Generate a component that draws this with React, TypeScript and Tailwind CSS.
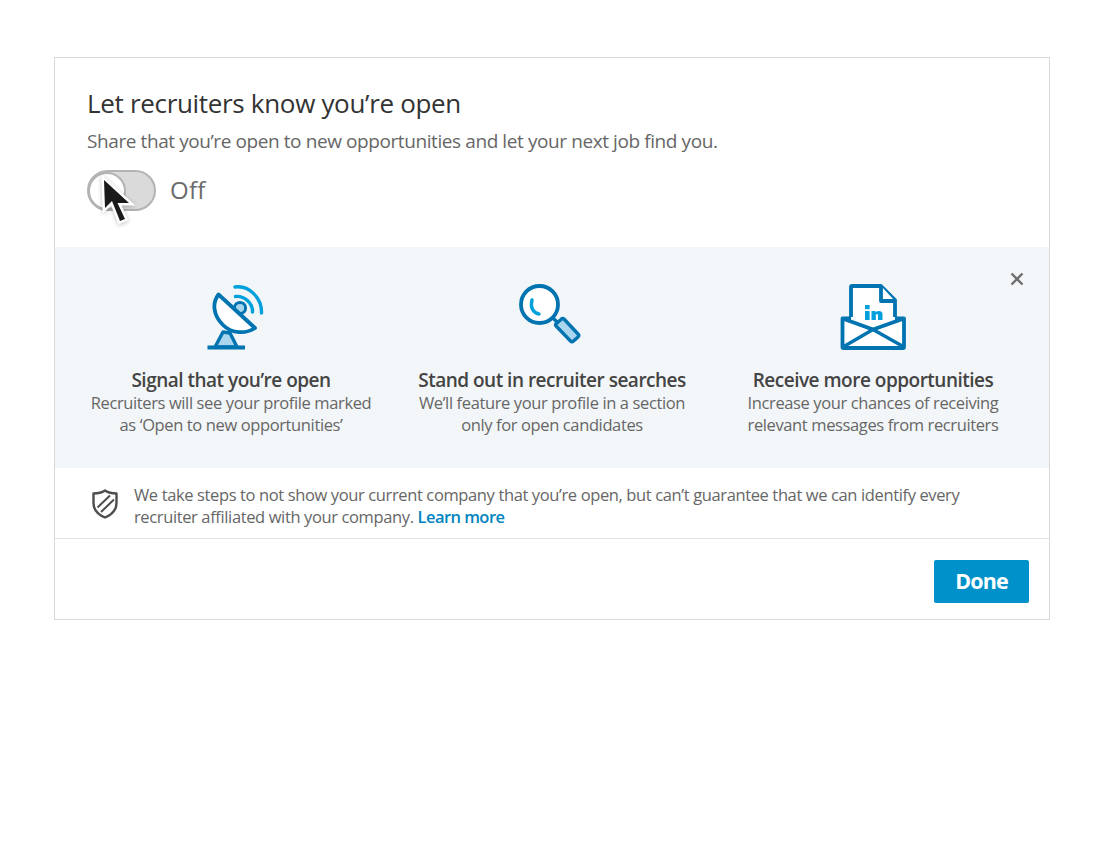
import React from 'react';

const DishIcon = () => (
  <svg width="90" height="90" viewBox="0 0 90 90" fill="none" className="block">
    <path d="M33 62 L25 77 H47 L40 63 Z" fill="#a9d6ee" stroke="#0073b1" strokeWidth="3.4" strokeLinejoin="round" />
    <path d="M17.5 77.5 H55" stroke="#0073b1" strokeWidth="3.8" />
    <circle cx="50" cy="38" r="5.6" fill="#a9d6ee" stroke="#0073b1" strokeWidth="3" />
    <path d="M28.5 24.5 L65 58 C56 64 42 64 33 55 C23 45 22 33 28.5 24.5 Z" fill="#fff" stroke="#0073b1" strokeWidth="3.8" strokeLinejoin="round" />
    <path d="M45 17 C59 15 72 28 71.5 43" stroke="#00a0dc" strokeWidth="3.4" strokeLinecap="round" />
    <path d="M45.5 26.5 C54 25.5 63 33 62.5 42" stroke="#00a0dc" strokeWidth="3.4" strokeLinecap="round" />
  </svg>
);

const SearchIcon = () => (
  <svg width="90" height="90" viewBox="0 0 90 90" fill="none" className="block">
    <circle cx="34.5" cy="34.5" r="18.5" fill="#fff" stroke="#0073b1" strokeWidth="3.8" />
    <path d="M48 48 L54 54" stroke="#0073b1" strokeWidth="3.4" />
    <path d="M59 49 L73 64 Q74.5 65.5 73 67 L68.5 71 Q67 72.5 65.5 71 L51 56 Q50 54.5 51.5 53.5 L56 49.5 Q57.5 48 59 49 Z" fill="#a9d6ee" stroke="#0073b1" strokeWidth="3.4" />
    <path d="M27 30 C25 37 28 43 34 44" stroke="#00a0dc" strokeWidth="3.4" strokeLinecap="round" />
  </svg>
);

const MailIcon = () => (
  <svg width="90" height="90" viewBox="0 0 90 90" fill="none" className="block">
    <path d="M21 48 V17 Q21 16 22 16 H51 L65 30 V48 L43 60 Z" fill="#fff" />
    <path d="M21 47 V17 Q21 16 22 16 H51 L65 30 V47" stroke="#0073b1" strokeWidth="3.8" strokeLinejoin="round" />
    <path d="M51 16 V31 H65" stroke="#0073b1" strokeWidth="3.8" strokeLinejoin="round" fill="#fff" />
    <path d="M12.5 48.5 L43 60.5 L74 48.5 V77 Q74 78 73 78 H13.5 Q12.5 78 12.5 77 Z" fill="#fff" />
    <path d="M12.5 48.5 H21 M65 48.5 H74 V77 Q74 78 73 78 H13.5 Q12.5 78 12.5 77 V48.5 L43 59.5 L74 48.5" stroke="#0073b1" strokeWidth="3.8" strokeLinejoin="round" />
    <path d="M13 77 L43 59.5 L74 77" stroke="#0073b1" strokeWidth="3.4" strokeLinejoin="round" />
    <rect x="35" y="41" width="4.6" height="9" fill="#00a0dc" />
    <rect x="35" y="35" width="4.6" height="4.2" fill="#00a0dc" />
    <path d="M41.5 41 H45.5 V42.5 C47 40.5 52.5 40 52.5 44.5 V50 H48 V45.5 C48 43.5 45.8 43.5 45.8 45.5 V50 H41.5 Z" fill="#00a0dc" />
  </svg>
);

const ShieldIcon = () => (
  <svg width="28" height="32" viewBox="0 0 28 32" fill="none" className="block">
    <path d="M14 2.5 C17 4.5 21 5.5 25.5 5.5 V15 C25.5 22 20 27 14 29.5 C8 27 2.5 22 2.5 15 V5.5 C7 5.5 11 4.5 14 2.5 Z" stroke="#4d4d4d" strokeWidth="2.4" strokeLinejoin="round" />
    <path d="M6.5 19.5 L19 7.5 M10 24 L23 11.5" stroke="#4d4d4d" strokeWidth="2" />
  </svg>
);

const Cursor = () => (
  <svg width="44" height="58" viewBox="0 0 44 58" fill="none" className="block drop-shadow-[0_1px_2px_rgba(0,0,0,0.25)]">
    <path d="M6 5 L7 33 L14 26 L22 46 L27 44 L19.5 28 L31 28 Z" fill="#1a1a1a" stroke="#fff" strokeWidth="5" strokeLinejoin="miter" paintOrder="stroke" />
  </svg>
);

const benefits = [
  {
    icon: <DishIcon />,
    shift: 'ml-[8px]',
    title: 'Signal that you’re open',
    lines: ['Recruiters will see your profile marked', 'as ‘Open to new opportunities’'],
  },
  {
    icon: <SearchIcon />,
    shift: '-ml-[4px]',
    title: 'Stand out in recruiter searches',
    lines: ['We’ll feature your profile in a section', 'only for open candidates'],
  },
  {
    icon: <MailIcon />,
    shift: 'ml-[4px]',
    title: 'Receive more opportunities',
    lines: ['Increase your chances of receiving', 'relevant messages from recruiters'],
  },
];

const App: React.FC = () => {
  return (
    <div className="min-h-[866px] bg-white pt-[57px] pl-[54px] font-['Open_Sans',sans-serif] text-[#595959]">
      <div className="w-[996px] h-[563px] border border-[#d9d9d9] flex flex-col">
        <div className="h-[189px] pl-[32px] pt-[27px]">
          <h1 className="text-[26px] leading-[36px] font-normal text-[#333] tracking-[-0.32px]">Let recruiters know you’re open</h1>
          <p className="mt-[7px] text-[19px] leading-[26px] text-[#666] tracking-[-0.41px]">
            Share that you’re open to new opportunities and let your next job find you.
          </p>
          <div className="mt-[16px] flex items-center">
            <div className="relative w-[69px] h-[41px] rounded-full bg-[#d9dad9] border-[2px] border-[#b3b3b3]">
              <div className="w-[38px] h-[38px] -ml-[1px] -mt-[0.5px] rounded-full bg-white border-[2px] border-[#b3b3b3]" />
              <div className="absolute left-[9px] top-[3px]">
                <Cursor />
              </div>
            </div>
            <span className="ml-[14px] mb-[2px] text-[24px] leading-[30px] text-[#6b6b6b] tracking-[0.3px]">Off</span>
          </div>
        </div>

        <div className="relative h-[221px] bg-[#f3f6f8] px-[15.5px] pt-[23px] grid grid-cols-3">
          {benefits.map((b) => (
            <div key={b.title} className="flex flex-col items-center text-center">
              <div className={`h-[90px] ${b.shift}`}>{b.icon}</div>
              <h2 className="mt-[8px] text-[19px] leading-[24px] font-semibold text-[#444] tracking-[-0.5px]">{b.title}</h2>
              {b.lines.map((l) => (
                <p key={l} className="text-[16.5px] leading-[21.5px] text-[#666] tracking-[-0.38px] whitespace-nowrap">{l}</p>
              ))}
            </div>
          ))}
          <svg width="14" height="14" viewBox="0 0 14 14" className="absolute right-[25px] top-[25px]">
            <path d="M1.5 1.5 L12.5 12.5 M12.5 1.5 L1.5 12.5" stroke="#6e6e6e" strokeWidth="2.4" />
          </svg>
        </div>

        <div className="h-[71px] flex items-start pl-[36px] pt-[16px] border-b border-[#e0e0e0]">
          <div className="mt-[4px]"><ShieldIcon /></div>
          <p className="ml-[15px] text-[16.5px] leading-[21.5px] text-[#666] tracking-[-0.375px]">
            We take steps to not show your current company that you’re open, but can’t guarantee that we can identify every<br />
            recruiter affiliated with your company. <a className="font-semibold text-[#0084bf] tracking-[-0.55px]">Learn more</a>
          </p>
        </div>

        <div className="flex-1 flex justify-end items-start pt-[21px] pr-[20px]">
          <button className="w-[95px] h-[43px] rounded-[2px] bg-[#0091ca] text-white text-[21.5px] font-bold tracking-[-0.9px]">Done</button>
        </div>
      </div>
    </div>
  );
};

export default App;
